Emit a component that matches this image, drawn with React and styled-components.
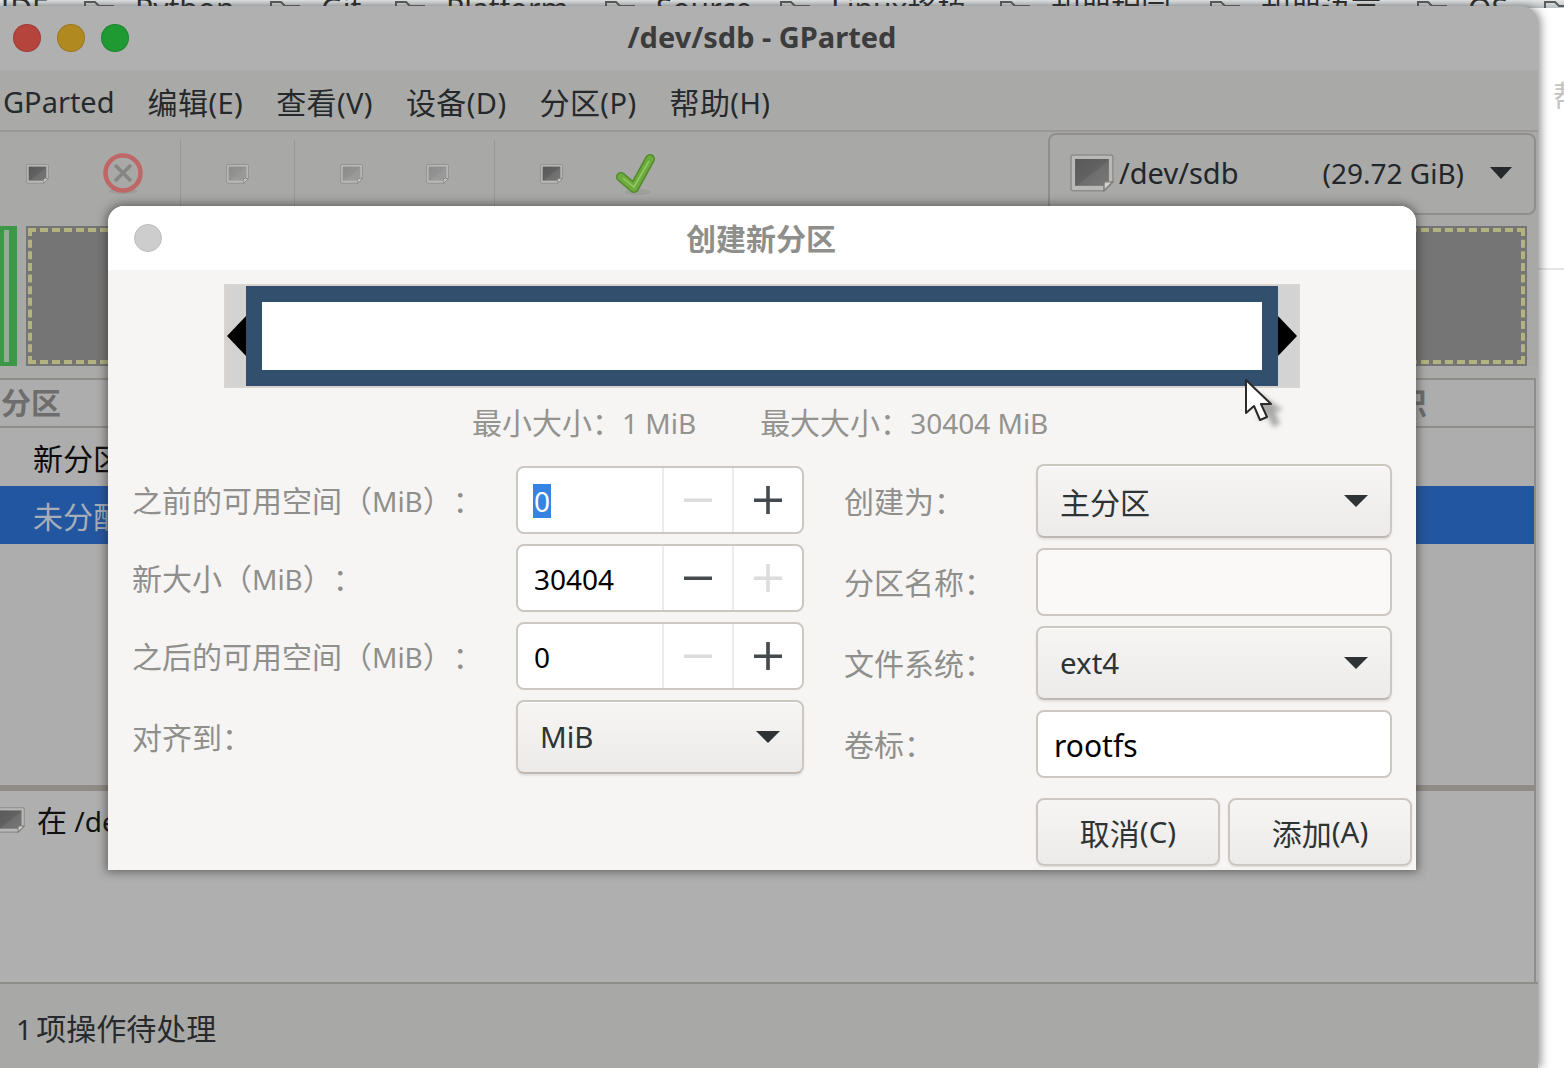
import React from 'react'
import styled, { createGlobalStyle } from 'styled-components'

const Global = createGlobalStyle`
    html, body {
        margin: 0;
        padding: 0;
        background: #fff;
    }
    body {
        width: 1564px;
        height: 1068px;
        overflow: hidden;
        font-family: "Noto Sans", "Noto Sans CJK SC", sans-serif;
        font-size: 28px;
        line-height: 36px;
        text-spacing-trim: space-all;
    }
`

const tabs = [
    { name: 'Python', width: 186 },
    { name: 'Git', width: 125 },
    { name: 'Platform', width: 210 },
    { name: 'Source', width: 175 },
    { name: 'Linux移植', width: 220 },
    { name: '和朋相同', width: 210 },
    { name: '和朋语言', width: 207 },
    { name: 'OS', width: 127 },
    { name: '', width: 40 },
]

function DriveIcon({ size = 23, dim }) {
    const id = `drive${size}${dim ? 'd' : ''}`
    return (
        <svg width={size} height={size * 0.86} viewBox="0 0 44 38">
            <defs>
                <linearGradient id={id} x1="0" y1="0" x2="1" y2="1">
                    <stop offset="0" stopColor={dim ? '#8c8c8c' : '#585858'} />
                    <stop offset="0.5" stopColor={dim ? '#929292' : '#626262'} />
                    <stop offset="0.55" stopColor={dim ? '#989898' : '#6e6e6e'} />
                    <stop offset="1" stopColor={dim ? '#9c9c9c' : '#787878'} />
                </linearGradient>
            </defs>
            <path d="M3 1h38a2 2 0 0 1 2 2v25l-9 9H3a2 2 0 0 1-2-2V3a2 2 0 0 1 2-2z" fill="#b9b9b7" stroke="#8d8d8b" strokeWidth="1.5" />
            <rect x="5" y="5" width="34" height="27" fill={`url(#${id})`} />
            <path d="M43 28h-7a2 2 0 0 0-2 2v7z" fill="#d0d0ce" stroke="#7f7f7d" strokeWidth="1.5" />
        </svg>
    )
}

function CancelIcon() {
    return (
        <svg width="44" height="46" viewBox="0 0 44 46">
            <ellipse cx="22" cy="40" rx="14" ry="3" fill="#8f8f8d" opacity="0.5" />
            <circle cx="22" cy="22" r="17.5" fill="#a8a8a6" stroke="#bf6666" strokeWidth="4.5" />
            <path d="M14 14l16 16M30 14L14 30" stroke="#858583" strokeWidth="3.4" fill="none" />
        </svg>
    )
}

function ApplyIcon() {
    return (
        <svg width="46" height="46" viewBox="0 0 46 46">
            <ellipse cx="25" cy="41" rx="13" ry="3" fill="#8f8f8d" opacity="0.4" />
            <path d="M8 26l13 11L37 8" fill="none" stroke="#4f8a2b" strokeWidth="10" strokeLinejoin="round" strokeLinecap="round" />
            <path d="M8 26l13 11L37 8" fill="none" stroke="#6dab3c" strokeWidth="7" strokeLinejoin="round" strokeLinecap="round" />
            <path d="M10 27l11 9L36 10" fill="none" stroke="#93c768" strokeWidth="1.6" />
        </svg>
    )
}

function Arrow() {
    return <ComboArrow />
}

function Cursor() {
    return (
        <CursorWrap>
            <svg width="40" height="54" viewBox="0 0 40 54">
                <path d="M14 14v28l8-6 6 12 7-3-5-12 8-2z" fill="#a8a8a6" style={{ filter: 'blur(2.5px)' }} />
                <path d="M1 1v33l8-7 6 14 7-3-6-13h10z" fill="#fff" stroke="#2a2a2a" strokeWidth="2" strokeLinejoin="round" />
            </svg>
        </CursorWrap>
    )
}

function Spin({ value, selected, minusOff, plusOff }) {
    return (
        <SpinBox>
            <SpinValue>{selected ? <Selected>{value}</Selected> : value}</SpinValue>
            <SpinButton off={minusOff}>
                <svg width="28" height="28" viewBox="0 0 28 28"><path d="M0 12.5h28v3.5H0z" /></svg>
            </SpinButton>
            <SpinButton off={plusOff}>
                <svg width="28" height="28" viewBox="0 0 28 28"><path d="M0 12.5h12.2V0h3.6v12.5H28v3.5H15.8V28h-3.6V16H0z" /></svg>
            </SpinButton>
        </SpinBox>
    )
}

export default function App() {
    return (
        <Desktop>
            <Global />
            <TabStrip>
                <TabFirst>IDE</TabFirst>
                {tabs.map(t => (
                    <Tab key={t.name} w={t.width}>
                        <svg width="30" height="14" viewBox="0 0 30 14">
                            <path d="M1 14V2h10l4 4h14v8" fill="none" stroke="#5c5c5c" strokeWidth="2" />
                        </svg>
                        <span>{t.name}</span>
                    </Tab>
                ))}
            </TabStrip>
            <BehindText>帮助</BehindText>
            <BehindLine />

            <Window>
                <TitleBar>
                    <Lights>
                        <Light color="#b5443c" />
                        <Light color="#b08a20" />
                        <Light color="#1f9a32" />
                    </Lights>
                    <WindowTitle>/dev/sdb - GParted</WindowTitle>
                </TitleBar>

                <MenuBar>
                    <MenuItem>GParted</MenuItem>
                    <MenuItem><Cjk>编辑</Cjk>(E)</MenuItem>
                    <MenuItem><Cjk>查看</Cjk>(V)</MenuItem>
                    <MenuItem><Cjk>设备</Cjk>(D)</MenuItem>
                    <MenuItem><Cjk>分区</Cjk>(P)</MenuItem>
                    <MenuItem><Cjk>帮助</Cjk>(H)</MenuItem>
                </MenuBar>

                <ToolRow>
                    <Tools>
                        <ToolSlot w={74}><DriveIcon /></ToolSlot>
                        <ToolSlot w={106} pad={8}><CancelIcon /></ToolSlot>
                        <ToolSep />
                        <ToolSlot w={113}><DriveIcon dim /></ToolSlot>
                        <ToolSep />
                        <ToolSlot w={113}><DriveIcon dim /></ToolSlot>
                        <ToolSlot w={86} pad={28}><DriveIcon dim /></ToolSlot>
                        <ToolSep />
                        <ToolSlot w={112}><DriveIcon /></ToolSlot>
                        <ToolSlot w={58}><ApplyIcon /></ToolSlot>
                    </Tools>
                    <DeviceCombo>
                        <DriveIcon size={44} />
                        <DeviceName>/dev/sdb</DeviceName>
                        <DeviceSize>(29.72 GiB)</DeviceSize>
                        <DeviceArrow />
                    </DeviceCombo>
                </ToolRow>

                <PartitionMap>
                    <UsedBlock />
                    <FreeBlock><FreeDash /></FreeBlock>
                </PartitionMap>

                <Table>
                    <TableHead>
                        <span>分区</span>
                        <span>标识</span>
                    </TableHead>
                    <TableRow>新分区 #1</TableRow>
                    <TableRow selected>未分配</TableRow>
                </Table>

                <LogPane>
                    <LogIcon><DriveIcon size={30} /></LogIcon>
                    <span><Cjk>在</Cjk> /dev/sdb</span>
                </LogPane>

                <StatusBar>1 <Cjk>项操作待处理</Cjk></StatusBar>
            </Window>

            <Dialog>
                <DialogHead>
                    <DialogClose />
                    <DialogTitle>创建新分区</DialogTitle>
                </DialogHead>
                <DialogBody>
                    <Slider>
                        <ArrowLeft />
                        <SliderBar />
                        <ArrowRight />
                    </Slider>
                    <SizeInfo>
                        <span><Cjk>最小大小：</Cjk>1 MiB</span>
                        <span><Cjk>最大大小：</Cjk>30404 MiB</span>
                    </SizeInfo>
                    <Form>
                        <LeftColumn>
                            <Field>
                                <FieldLabel><Cjk>之前的可用空间（</Cjk>MiB<Cjk>）：</Cjk></FieldLabel>
                                <Spin value="0" selected minusOff />
                            </Field>
                            <Field>
                                <FieldLabel><Cjk>新大小（</Cjk>MiB<Cjk>）：</Cjk></FieldLabel>
                                <Spin value="30404" plusOff />
                            </Field>
                            <Field>
                                <FieldLabel><Cjk>之后的可用空间（</Cjk>MiB<Cjk>）：</Cjk></FieldLabel>
                                <Spin value="0" minusOff />
                            </Field>
                            <Field>
                                <FieldLabel><Cjk>对齐到：</Cjk></FieldLabel>
                                <Combo>MiB<Arrow /></Combo>
                            </Field>
                        </LeftColumn>
                        <RightColumn>
                            <RightField>
                                <FieldLabel><Cjk>创建为：</Cjk></FieldLabel>
                                <Combo wide><Cjk>主分区</Cjk><Arrow /></Combo>
                            </RightField>
                            <RightField>
                                <FieldLabel><Cjk>分区名称：</Cjk></FieldLabel>
                                <Entry disabled />
                            </RightField>
                            <RightField>
                                <FieldLabel><Cjk>文件系统：</Cjk></FieldLabel>
                                <Combo wide>ext4<Arrow /></Combo>
                            </RightField>
                            <RightField>
                                <FieldLabel><Cjk>卷标：</Cjk></FieldLabel>
                                <Entry>rootfs</Entry>
                            </RightField>
                            <Actions>
                                <ActionButton><Cjk>取消</Cjk>(C)</ActionButton>
                                <ActionButton><Cjk>添加</Cjk>(A)</ActionButton>
                            </Actions>
                        </RightColumn>
                    </Form>
                </DialogBody>
                <Cursor />
            </Dialog>
        </Desktop>
    )
}

const Desktop = styled.div`
    position: relative;
    width: 1564px;
    height: 1068px;
    overflow: hidden;
    background: #fff;
`

const TabStrip = styled.div`
    display: flex;
    height: 8px;
    overflow: hidden;
    background: linear-gradient(#e4e6e6, #b9bfc1);
    color: #2c2c2c;
    line-height: 28px;
`

const TabFirst = styled.div`
    width: 84px;
    flex: none;
    margin-top: -5px;
    font-size: 30px;
`

const Tab = styled.div`
    display: flex;
    gap: 21px;
    width: ${props => props.w}px;
    flex: none;
    white-space: nowrap;
    span {
        margin-top: -5px;
        font-size: 30px;
    }
    svg {
        flex: none;
    }
`

const BehindText = styled.div`
    margin: 70px 0 0 1553px;
    font-size: 30px;
    color: #c4c4c4;
    white-space: nowrap;
`

const BehindLine = styled.div`
    margin-top: 154px;
    height: 2px;
    background: #e6e6e6;
`

const Window = styled.div`
    position: absolute;
    left: 0;
    top: 6px;
    width: 1538px;
    height: 1062px;
    display: flex;
    flex-direction: column;
    border-top-right-radius: 18px;
    background: #aeaeae;
    box-shadow: 3px 0 8px rgba(60, 60, 60, 0.55);
    overflow: hidden;
`

const TitleBar = styled.div`
    height: 64px;
    flex: none;
    display: flex;
    align-items: center;
    justify-content: center;
    background: #b0b0b0;
    position: relative;
`

const Lights = styled.div`
    position: absolute;
    left: 13px;
    top: 18px;
    display: flex;
    gap: 16px;
`

const Light = styled.div`
    width: 28px;
    height: 28px;
    border-radius: 50%;
    background: ${props => props.color};
    box-shadow: inset 0 0 0 1px rgba(0, 0, 0, 0.12);
`

const WindowTitle = styled.div`
    margin: 0 0 2px -14px;
    font-weight: 700;
    font-size: 29px;
    line-height: 28px;
    color: #3c3c3c;
`

const MenuBar = styled.div`
    height: 62px;
    flex: none;
    display: flex;
    align-items: center;
    gap: 33px;
    padding: 4px 0 0 3px;
    box-sizing: border-box;
    background: #a9a9a7;
    border-bottom: 2px solid #999896;
    font-size: 29px;
    color: #26292b;
`

const MenuItem = styled.div`
    white-space: nowrap;
    &:not(:first-child) {
        letter-spacing: 0.4px;
    }
`

const Cjk = styled.span`
    font-family: "Noto Sans CJK SC", sans-serif;
    font-size: 30px;
`

const ToolRow = styled.div`
    height: 86px;
    flex: none;
    display: flex;
    justify-content: space-between;
    padding-right: 2px;
    box-sizing: border-box;
    background: #a8a8a6;
`

const Tools = styled.div`
    display: flex;
    align-items: stretch;
    padding-top: 8px;
`

const ToolSlot = styled.div`
    width: ${props => props.w}px;
    padding-right: ${props => props.pad || 0}px;
    box-sizing: border-box;
    display: flex;
    align-items: center;
    justify-content: center;
    height: 68px;
`

const ToolSep = styled.div`
    width: 1px;
    height: 78px;
    background: #979795;
`

const DeviceCombo = styled.div`
    width: 488px;
    height: 82px;
    margin-top: 1px;
    display: flex;
    align-items: center;
    box-sizing: border-box;
    padding: 0 22px 2px 20px;
    border: 2px solid #8f8e8a;
    border-radius: 8px;
    background: #a9a9a7;
    font-size: 29px;
    color: #22262a;
`

const DeviceName = styled.div`
    margin-left: 5px;
`

const DeviceSize = styled.div`
    margin-left: auto;
    margin-right: 26px;
    font-size: 28px;
`

const DeviceArrow = styled.div`
    width: 0;
    height: 0;
    border-left: 11px solid transparent;
    border-right: 11px solid transparent;
    border-top: 12px solid #26292b;
`

const PartitionMap = styled.div`
    height: 140px;
    flex: none;
    margin-top: 8px;
    display: flex;
    gap: 9px;
    background: #a8a8a6;
    padding-right: 11px;
    box-shadow: 0 -8px 0 #a8a8a6, 0 12px 0 #aaaaa8;
`

const UsedBlock = styled.div`
    width: 17px;
    box-sizing: border-box;
    border: solid #3d9748;
    border-width: 4px 8px 4px 4px;
    background: #96ab96;
`

const FreeBlock = styled.div`
    flex: 1;
    padding: 2px;
    box-sizing: border-box;
    background: #757575;
`

const FreeDash = styled.div`
    height: 100%;
    box-sizing: border-box;
    border: 4px dashed #b3b382;
`

const Table = styled.div`
    height: 407px;
    flex: none;
    margin-top: 12px;
    margin-right: 2px;
    box-sizing: border-box;
    border-top: 2px solid #8f8d89;
    border-right: 2px solid #8f8d89;
    background: #adadad;
    color: #111;
`

const TableHead = styled.div`
    height: 42px;
    box-sizing: content-box;
    display: flex;
    gap: 1306px;
    align-items: center;
    padding: 0 0 4px 1px;
    font-family: "Noto Sans CJK SC", sans-serif;
    font-size: 30px;
    line-height: 42px;
    font-weight: 700;
    color: #6d6d6d;
    border-bottom: 2px solid #8f8d89;
`

const TableRow = styled.div`
    height: 58px;
    display: flex;
    align-items: center;
    padding-left: 33px;
    font-family: "Noto Sans CJK SC", sans-serif;
    font-size: 30px;
    background: ${props => (props.selected ? '#2356a0' : 'transparent')};
    color: ${props => (props.selected ? '#a6aeb8' : '#0c0c0c')};
`

const LogPane = styled.div`
    height: 197px;
    flex: none;
    display: flex;
    align-items: flex-start;
    gap: 12px;
    margin-right: 2px;
    padding-top: 10px;
    box-sizing: border-box;
    border-top: 6px solid #8f8b85;
    border-right: 2px solid #8f8d89;
    background: #afafaf;
    color: #111;
`

const LogIcon = styled.div`
    margin-left: -5px;
    height: 30px;
    padding-top: 3px;
`

const StatusBar = styled.div`
    flex: 1;
    padding: 25px 0 0 16px;
    border-top: 2px solid #8f8d89;
    background: #a8a8a6;
    word-spacing: -3px;
    color: #262a2c;
`

const Dialog = styled.div`
    position: absolute;
    left: 108px;
    top: 206px;
    width: 1308px;
    height: 664px;
    display: flex;
    flex-direction: column;
    border-radius: 16px 16px 0 0;
    background: #f6f5f4;
    box-shadow: 0 0 10px 2px rgba(40, 40, 40, 0.55);
`

const DialogHead = styled.div`
    height: 64px;
    flex: none;
    display: flex;
    align-items: center;
    justify-content: center;
    position: relative;
    background: #fff;
    border-radius: 16px 16px 0 0;
`

const DialogClose = styled.div`
    position: absolute;
    left: 26px;
    top: 18px;
    width: 28px;
    height: 28px;
    box-sizing: border-box;
    border-radius: 50%;
    background: #cdcdcd;
    border: 1px solid #bdbdbd;
`

const DialogTitle = styled.div`
    margin: 0 0 2px -2px;
    font-family: "Noto Sans CJK SC", sans-serif;
    font-size: 30px;
    font-weight: 700;
    color: #8e8e8c;
`

const DialogBody = styled.div`
    flex: 1;
    display: flex;
    flex-direction: column;
    padding: 14px 4px 0 25px;
`

const Slider = styled.div`
    width: 1076px;
    height: 104px;
    margin-left: 91px;
    display: flex;
    align-items: center;
    justify-content: center;
    box-sizing: border-box;
    border: 2px solid #d9d4cf;
    background: #d3d3d3;
`

const SliderBar = styled.div`
    width: 1032px;
    height: 100px;
    box-sizing: border-box;
    border: 16px solid #324f6e;
    background: #fff;
`

const ArrowLeft = styled.div`
    width: 0;
    height: 0;
    border-top: 20px solid transparent;
    border-bottom: 20px solid transparent;
    border-right: 19px solid #000;
`

const ArrowRight = styled.div`
    width: 0;
    height: 0;
    border-top: 20px solid transparent;
    border-bottom: 20px solid transparent;
    border-left: 19px solid #000;
`

const SizeInfo = styled.div`
    height: 76px;
    display: flex;
    align-items: center;
    gap: 64px;
    padding: 0 0 8px 339px;
    box-sizing: border-box;
    color: #93938f;
    white-space: nowrap;
`

const Form = styled.div`
    display: flex;
`

const LeftColumn = styled.div`
    width: 671px;
    flex: none;
    display: flex;
    flex-direction: column;
    gap: 10px;
    padding-top: 2px;
    margin-right: 41px;
`

const Field = styled.div`
    display: flex;
    align-items: center;
`

const RightColumn = styled.div`
    display: flex;
    flex-direction: column;
    gap: 10px;
`

const RightField = styled.div`
    display: flex;
    align-items: center;
    width: 547px;
`

const FieldLabel = styled.div`
    width: 384px;
    margin-left: -1px;
    flex: none;
    color: #8f8f8c;
    white-space: nowrap;
    ${RightField} & {
        width: 192px;
    }
`

const SpinBox = styled.div`
    width: 288px;
    height: 68px;
    display: flex;
    box-sizing: border-box;
    border: 2px solid #cdc7c2;
    border-radius: 8px;
    background: #fff;
    overflow: hidden;
`

const SpinValue = styled.div`
    flex: 1;
    display: flex;
    align-items: center;
    padding: 2px 0 0 16px;
    color: #000;
`

const Selected = styled.span`
    display: block;
    height: 34px;
    line-height: 34px;
    padding: 0 1px;
    margin-left: -1px;
    background: #3584e4;
    color: #fff;
`

const SpinButton = styled.div`
    width: 70px;
    flex: none;
    display: flex;
    align-items: center;
    justify-content: center;
    box-sizing: border-box;
    border-left: 2px solid #ececec;
    svg {
        fill: ${props => (props.off ? '#dcdcdc' : '#444a4d')};
    }
`

const Combo = styled.div`
    width: ${props => (props.wide ? '356px' : '288px')};
    height: 74px;
    display: flex;
    align-items: center;
    justify-content: space-between;
    box-sizing: border-box;
    padding: 0 22px;
    border: 2px solid #cdc7c2;
    border-bottom-color: #bfb8b2;
    border-radius: 8px;
    background: linear-gradient(#f6f5f4, #edebe9);
    box-shadow: 0 2px 2px rgba(0, 0, 0, 0.08), inset 0 1px 0 #fff;
    font-size: 29.5px;
    color: #2e3436;
`

const ComboArrow = styled.div`
    width: 0;
    height: 0;
    border-left: 12px solid transparent;
    border-right: 12px solid transparent;
    border-top: 12px solid #2e3436;
`

const Entry = styled.div`
    width: 356px;
    height: 68px;
    display: flex;
    align-items: center;
    box-sizing: border-box;
    padding: 3px 0 0 16px;
    border: 2px solid #cdc7c2;
    border-radius: 8px;
    background: ${props => (props.disabled ? '#faf9f8' : '#fff')};
    font-size: 30px;
    color: #000;
`

const Actions = styled.div`
    display: flex;
    gap: 8px;
    margin: 10px 0 0 191px;
`

const ActionButton = styled.div`
    width: 184px;
    height: 68px;
    display: flex;
    align-items: center;
    justify-content: center;
    box-sizing: border-box;
    border: 2px solid #cdc7c2;
    border-radius: 8px;
    background: linear-gradient(#f6f5f4, #edebe9);
    box-shadow: 0 1px 2px rgba(0, 0, 0, 0.1);
    font-size: 29.5px;
    color: #2e3436;
`

const CursorWrap = styled.div`
    position: absolute;
    left: 1137px;
    top: 173px;
    line-height: 0;
`
